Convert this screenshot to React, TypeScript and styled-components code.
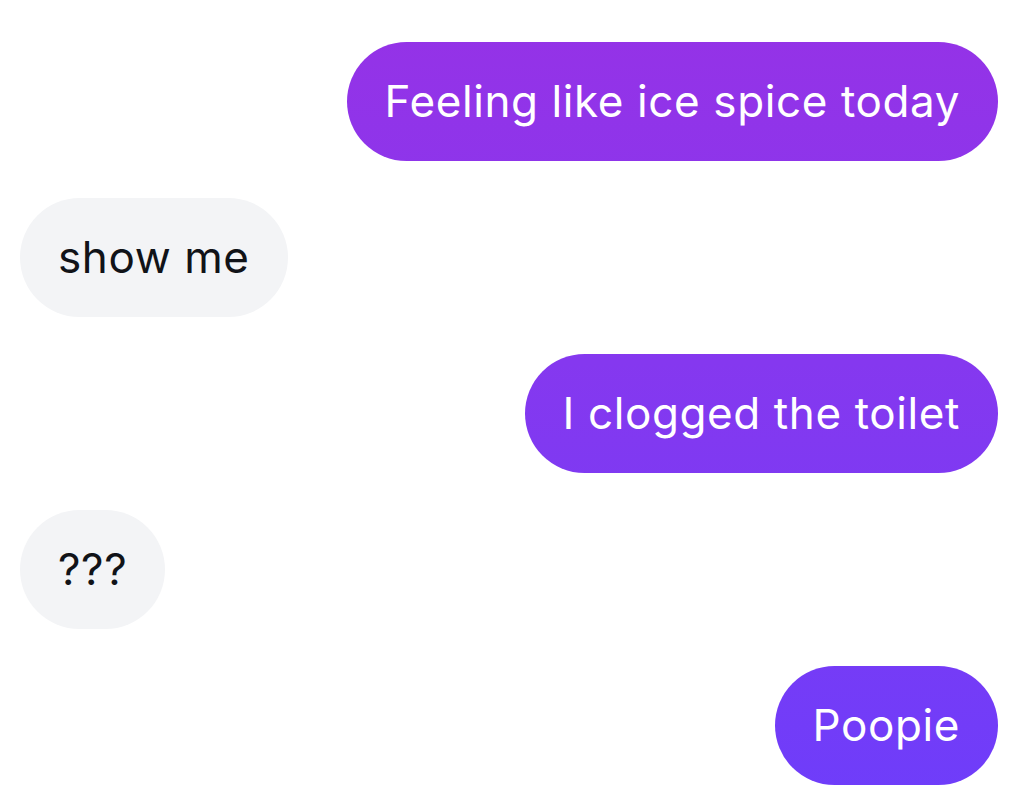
import styled, { createGlobalStyle } from "styled-components";

type Message = {
  id: number;
  text: string;
  mine: boolean;
};

const messages: Message[] = [
  { id: 1, text: "Feeling like ice spice today", mine: true },
  { id: 2, text: "show me", mine: false },
  { id: 3, text: "I clogged the toilet", mine: true },
  { id: 4, text: "???", mine: false },
  { id: 5, text: "Poopie", mine: true },
];

const GlobalStyle = createGlobalStyle`
  html, body {
    margin: 0;
    padding: 0;
    background: #ffffff;
    font-family: Inter, "Noto Sans", "Liberation Sans", sans-serif;
  }
`;

const Thread = styled.div`
  display: flex;
  flex-direction: column;
  gap: 37px;
  padding: 42px 23px 20px 20px;
`;

const Row = styled.div<{ $mine: boolean }>`
  display: flex;
  justify-content: ${(p) => (p.$mine ? "flex-end" : "flex-start")};
`;

const Bubble = styled.div<{ $mine: boolean }>`
  padding: 26px 38px 27px;
  border-radius: 60px;
  font-size: 44px;
  line-height: 66px;
  letter-spacing: 0.6px;
  white-space: nowrap;
  color: ${(p) => (p.$mine ? "#ffffff" : "#111318")};
  background: ${(p) =>
    p.$mine
      ? "linear-gradient(to bottom, #9632e6 0%, #8538ef 45%, #6e3dfa 100%) fixed"
      : "#f3f4f6"};
`;

const App = () => {
  return (
    <>
      <GlobalStyle />
      <Thread>
        {messages.map((m) => (
          <Row key={m.id} $mine={m.mine}>
            <Bubble $mine={m.mine}>{m.text}</Bubble>
          </Row>
        ))}
      </Thread>
    </>
  );
};

export default App;
